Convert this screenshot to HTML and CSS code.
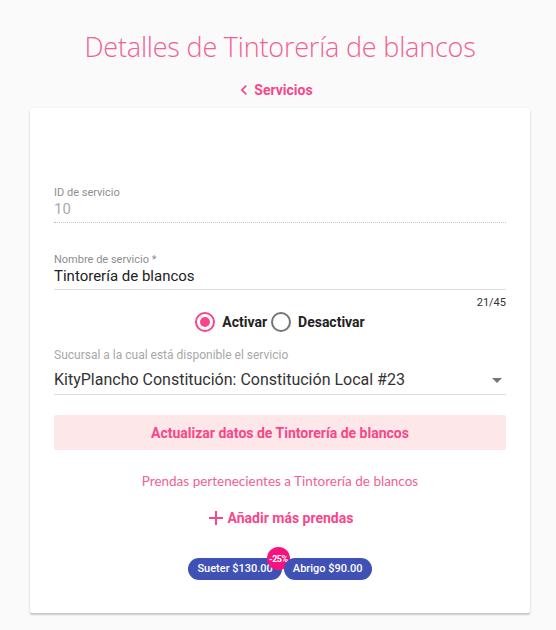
FILE: index.html
```html
<!DOCTYPE html>
<html lang="es">
<head>
<meta charset="utf-8">
<link rel="stylesheet" href="styles.css">
</head>
<body>
<div class="page">
  <h1 class="title">Detalles de Tintorería de blancos</h1>
  <a class="back">
    <svg class="chev" viewBox="0 0 24 24" width="20" height="20"><path d="M15.41 7.41 14 6l-6 6 6 6 1.41-1.41L10.83 12z" fill="currentColor"/></svg>
    <span>Servicios</span>
  </a>
  <div class="card">
    <div class="field field-id">
      <div class="label">ID de servicio</div>
      <div class="value disabled">10</div>
    </div>
    <div class="field field-name">
      <div class="label">Nombre de servicio *</div>
      <div class="value">Tintorería de blancos</div>
    </div>
    <div class="counter">21/45</div>
    <div class="radios">
      <span class="radio on"><span class="dot"></span></span><span class="rlabel">Activar</span>
      <span class="radio"></span><span class="rlabel">Desactivar</span>
    </div>
    <div class="field field-select">
      <div class="label big">Sucursal a la cual está disponible el servicio</div>
      <div class="value select"><span>KityPlancho Constitución: Constitución Local #23</span><span class="arrow"></span></div>
    </div>
    <button class="update">Actualizar datos de Tintorería de blancos</button>
    <div class="subhead">Prendas pertenecientes a Tintorería de blancos</div>
    <div class="add">
      <svg viewBox="0 0 24 24" width="24" height="24"><path d="M19 13h-6v6h-2v-6H5v-2h6V5h2v6h6v2z" fill="currentColor"/></svg>
      <span>Añadir más prendas</span>
    </div>
    <div class="chips">
      <span class="chip">Sueter $130.00<span class="badge">-25%</span></span>
      <span class="chip">Abrigo $90.00</span>
    </div>
  </div>
</div>
</body>
</html>
```
FILE: styles.css
```css
html, body { margin: 0; padding: 0; background: #fafafa; }
body { font-family: Roboto, "Liberation Sans", sans-serif; color: #222; }
.page { width: 500px; margin: 0 auto; padding: 28px 0 0 4px; display: flex; flex-direction: column; align-items: center; }
.title { margin: 0; font-family: "Open Sans", Lato, sans-serif; font-weight: 300; font-size: 27px; line-height: 38px; color: #f06292; letter-spacing: -0.2px; }
.back { display: flex; align-items: center; gap: 0; margin-top: 14px; margin-left: -13px; color: #f8468a; font-weight: 700; font-size: 14px; line-height: 20px; }
.card { box-sizing: border-box; width: 500px; margin-top: 8px; background: #fff; border-radius: 2px; box-shadow: 0 2px 2px rgba(0,0,0,.2), 0 0 2px rgba(0,0,0,.08); padding: 78px 24px 33px; display: flex; flex-direction: column; align-items: stretch; margin-bottom: 20px; }
.field { display: flex; flex-direction: column; }
.label { font-size: 11px; line-height: 14px; color: #8e8e8e; }
.label.big { font-size: 12px; color: #a8a8a8; }
.value { font-size: 15px; line-height: 18px; padding: 0 0 4px; border-bottom: 1px solid #dcdcdc; }
.value.disabled { color: #aaa; border-bottom: 1px dotted #c4c4c4; }
.field-name { margin-top: 30px; }
.counter { align-self: flex-end; font-size: 11px; line-height: 14px; color: #333; margin-top: 6px; }
.radios { display: flex; align-items: center; justify-content: center; margin-top: 2px; font-weight: 700; font-size: 14px; }
.radio { width: 16px; height: 16px; border: 2px solid #757575; border-radius: 50%; display: flex; align-items: center; justify-content: center; margin-right: 7px; }
.radio.on { border-color: #f8468a; }
.radio .dot { width: 10px; height: 10px; border-radius: 50%; background: #f8468a; }
.rlabel { margin-right: 4px; }
.rlabel:last-child { margin-right: 0; }
.field-select { margin-top: 16px; }
.select { display: flex; justify-content: space-between; align-items: center; font-size: 16px; line-height: 20px; color: #333; padding: 8px 0 4px; }
.arrow { width: 0; height: 0; border-left: 5px solid transparent; border-right: 5px solid transparent; border-top: 5px solid #757575; margin-right: 4px; }
.update { margin-top: 20px; height: 35px; border: 0; border-radius: 2px; background: #fde7e8; color: #f8468a; font-family: Roboto, sans-serif; font-weight: 700; font-size: 14px; }
.subhead { margin-top: 21px; text-align: center; font-family: Lato, sans-serif; font-size: 13.5px; color: #f06292; line-height: 20px; }
.add { margin-top: 15px; margin-left: -3px; display: flex; justify-content: center; align-items: center; gap: 0; color: #f8468a; font-weight: 700; font-size: 14px; line-height: 24px; }
.chips { margin-top: 28px; display: flex; justify-content: center; gap: 2px; }
.chip { position: relative; background: #3f51b5; color: #fff; font-size: 11px; font-weight: 500; line-height: 22px; padding: 0 9px; border-radius: 11px; }
.badge { position: absolute; right: -8px; top: -11px; width: 23px; height: 23px; border-radius: 50%; background: #f8127e; color: #fff; font-size: 9px; font-weight: 700; letter-spacing: -0.5px; display: flex; align-items: center; justify-content: center; }
```
